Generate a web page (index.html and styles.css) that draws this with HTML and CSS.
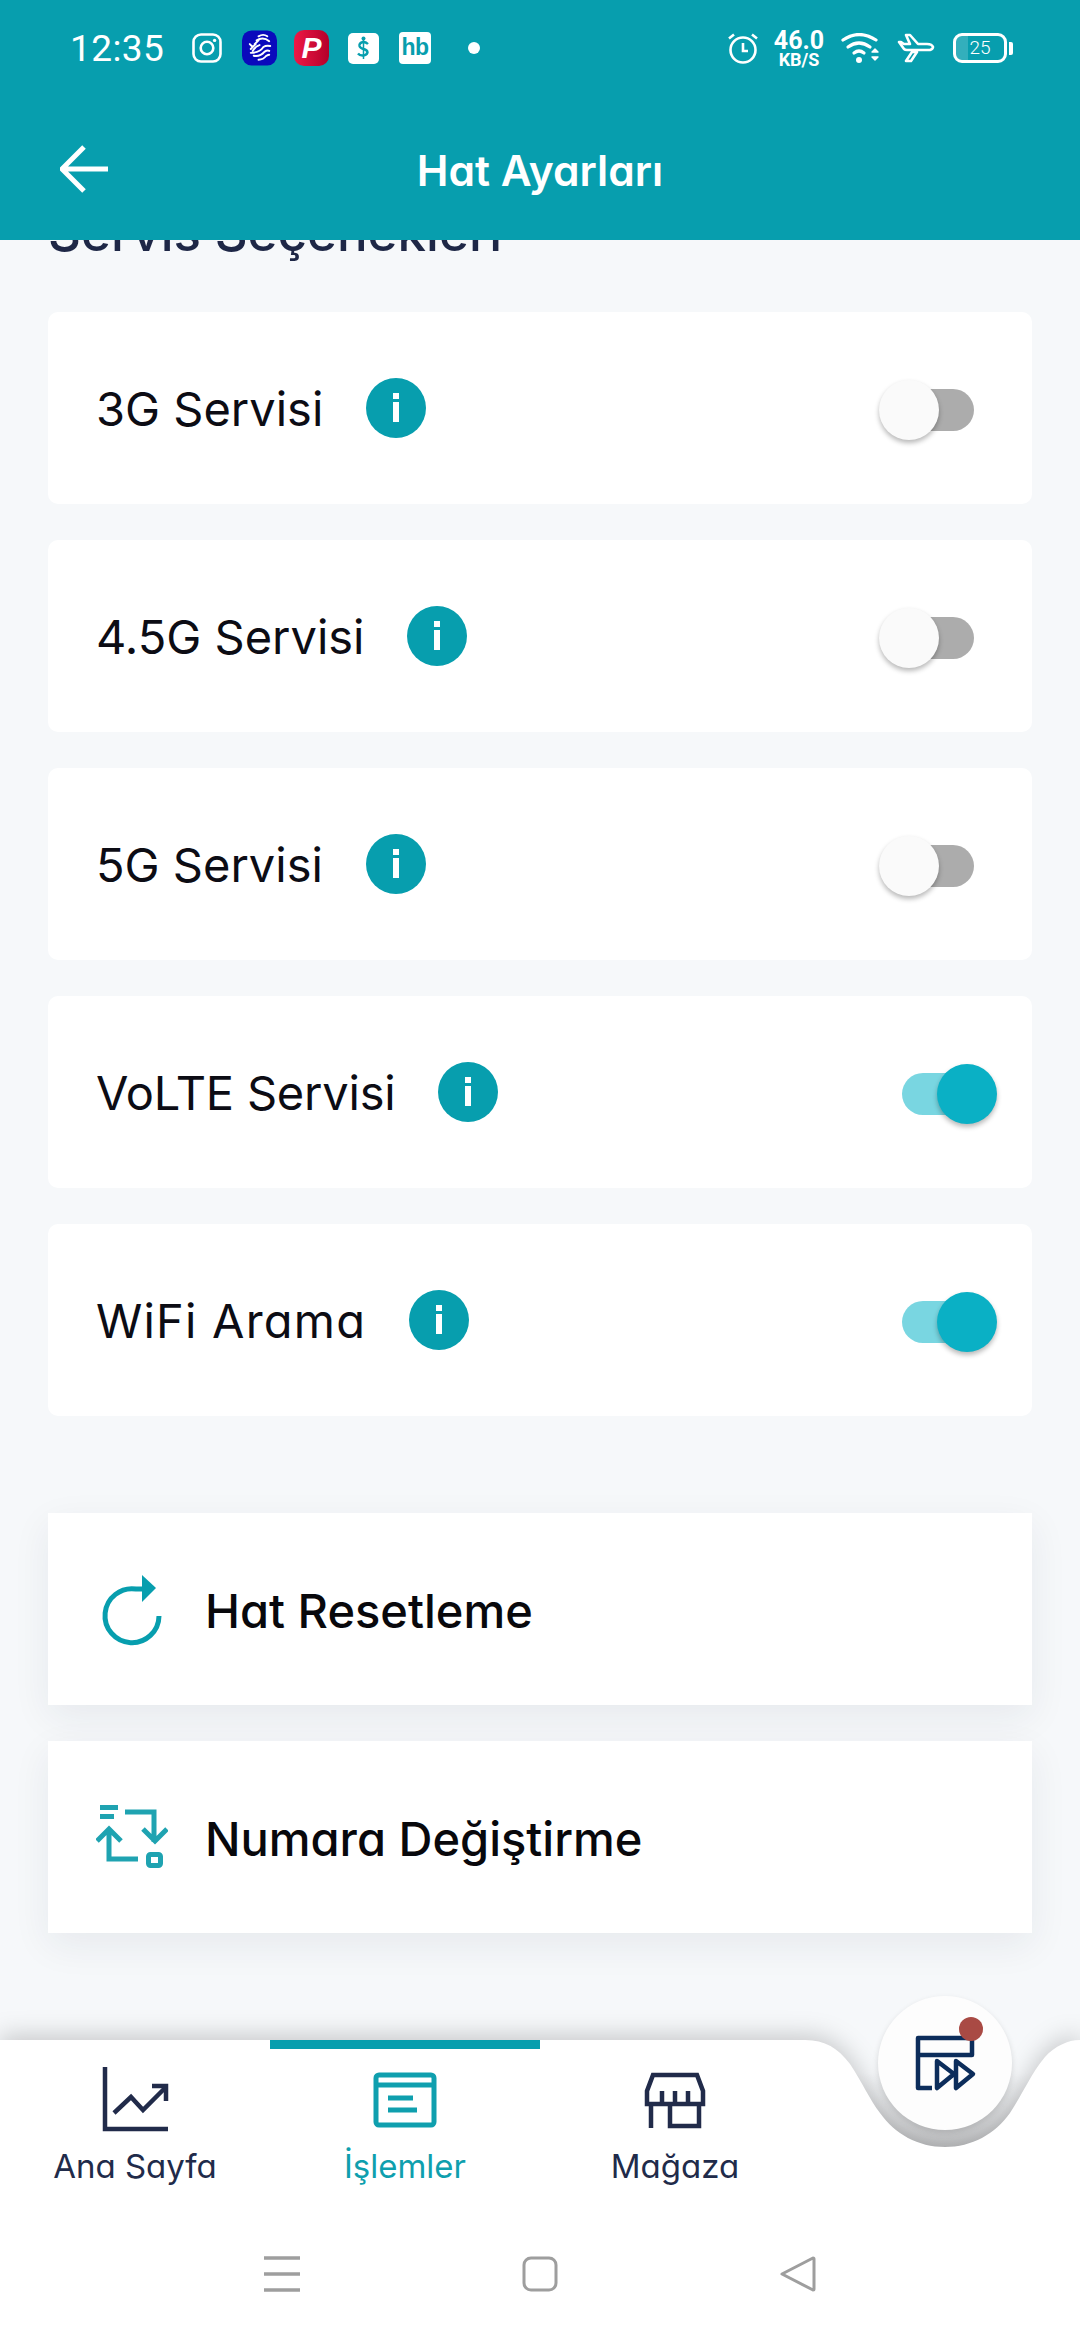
FILE: index.html
```html
<!DOCTYPE html>
<html lang="tr">
<head>
<meta charset="utf-8">
<title>Hat Ayarları</title>
<link rel="stylesheet" href="styles.css">
</head>
<body>
<div class="screen">
  <header class="header">
    <div class="status">
      <span class="clock">12:35</span>
      <div class="app-icons">
        <svg class="ic-insta" viewBox="0 0 30 30"><rect x="1.5" y="1.5" width="27" height="27" rx="7.5" fill="none" stroke="#fff" stroke-width="2.6"/><circle cx="15" cy="15" r="6.3" fill="none" stroke="#fff" stroke-width="2.6"/><circle cx="22.6" cy="7.4" r="1.7" fill="#fff"/></svg>
        <svg class="ic-tile" viewBox="0 0 36 36"><rect width="36" height="36" rx="10" fill="#0a0abc"/><g fill="none" stroke="#fff" stroke-width="2" stroke-linecap="round"><path d="M17 6q5-3 9 0"/><path d="M15 10q7-4 13 1"/><path d="M13 14l4-4M9 19l5-5M8 14l3 3"/><path d="M11 21q3-5 7-6"/><path d="M9 23q9 0 13-6q3-2 7-1"/><path d="M12 26q7 1 11-4q3-2 5-1"/><path d="M17 30q5 0 8-4q2-1 3-1"/></g></svg>
        <span class="tile-p">P</span>
        <svg class="ic-bank" viewBox="0 0 31 31"><rect width="31" height="31" rx="5" fill="#fff"/><circle cx="15.5" cy="5.5" r="2" fill="#079eae"/><path d="M20 11q-2-2-5-2q-4 1-3.500 4q.5 2 4 3q4 1 4 3.500q-1 3-5 3q-3 0-4.500-2" fill="none" stroke="#079eae" stroke-width="2.400"/><path d="M15.500 7v19" stroke="#079eae" stroke-width="1.500"/></svg>
        <span class="tile-hb">hb</span>
        <span class="notif-dot"></span>
      </div>
      <div class="sys-icons">
        <svg class="ic-alarm" viewBox="0 0 30 32"><g fill="none" stroke="#fff" stroke-width="2.600"><circle cx="15" cy="18" r="12.500"/><path d="M15 11v8h5M1 6.500l5-4M29 6.500l-5-4"/></g></svg>
        <div class="speed"><span class="speed-num">46.0</span><span class="speed-unit">KB/S</span></div>
        <svg class="ic-wifi" viewBox="0 0 40 31"><g fill="none" stroke="#fff" stroke-width="3.200" stroke-linecap="round"><path d="M2 7q16-11 33 0"/><path d="M7 14q11-8 22 0"/><path d="M13 20q5-4 10 0"/></g><circle cx="18" cy="27" r="3" fill="#fff"/><path d="M31 19l3-3 3 3zM31 24l3 3 3-3z" fill="#fff" stroke="#fff" stroke-width="1.400" stroke-linejoin="round"/></svg>
        <svg class="ic-plane" viewBox="0 0 38 30"><path d="M2 9l5 7q1 1 3 1h23q3-1 3-3q-1-3-6-3H21L13 2h-4l4 9H7L4 9zM15 19h5l-6 9h-5z" fill="none" stroke="#fff" stroke-width="2.600" stroke-linejoin="round"/></svg>
        <div class="battery"><span class="battery-fill"></span><span class="battery-num">25</span><span class="battery-nub"></span></div>
      </div>
    </div>
    <div class="toolbar">
      <svg class="back" viewBox="0 0 48 48"><path d="M24 2L2 24l22 22M2 24h46" fill="none" stroke="#fff" stroke-width="5"/></svg>
      <h1 class="title">Hat Ayarları</h1>
    </div>
  </header>

  <main class="content">
    <h2 class="section-title">Servis Seçenekleri</h2>
    <section class="cards">
      <div class="card"><span class="card-label">3G Servisi</span><span class="info"></span><span class="switch"><span class="knob"></span></span></div>
      <div class="card"><span class="card-label">4.5G Servisi</span><span class="info"></span><span class="switch"><span class="knob"></span></span></div>
      <div class="card"><span class="card-label">5G Servisi</span><span class="info"></span><span class="switch"><span class="knob"></span></span></div>
      <div class="card"><span class="card-label tight">VoLTE Servisi</span><span class="info"></span><span class="switch on"><span class="knob"></span></span></div>
      <div class="card"><span class="card-label wide">WiFi Arama</span><span class="info"></span><span class="switch on"><span class="knob"></span></span></div>
    </section>
    <section class="actions">
      <div class="action">
        <svg class="action-icon" viewBox="0 0 72 80"><path d="M46 20H40A27 27 0 1 0 63 47" fill="none" stroke="#079eae" stroke-width="5"/><path d="M46 6l14 13-14 14z" fill="#079eae"/></svg>
        <span class="action-label">Hat Resetleme</span>
      </div>
      <div class="action">
        <svg class="action-icon" viewBox="0 0 72 80"><g fill="none" stroke="#1fa3b1" stroke-width="5"><path d="M4 10.500h18M4 19.500h14M29 15h29v30M47 32l12 12 12-12M13 32v30h29M1 44l12-12 12 12"/><rect x="52.500" y="57.500" width="12" height="11" rx="2"/></g></svg>
        <span class="action-label">Numara Değiştirme</span>
      </div>
    </section>
  </main>

  <nav class="bottom">
    <svg class="bottom-bg" viewBox="0 0 1080 300">
      <defs><linearGradient id="notchShade" x1="0" y1="0" x2="0" y2="1"><stop offset="0.3" stop-color="#c6c7c9" stop-opacity="0"/><stop offset="1" stop-color="#c6c7c9"/></linearGradient></defs>
      <rect x="820" y="0" width="260" height="110" fill="url(#notchShade)"/>
      <path class="bottom-shape" d="M0 0H805C825 0 838 8 850 24C862 42 870 60 880 73C895 94 918 107 945 107C972 107 995 94 1010 73C1022 55 1032 32 1045 17C1055 6 1068 0 1080 0V300H0Z" fill="#fff"/>
    </svg>
    <div class="tabs">
      <div class="tab">
        <svg class="tab-icon" viewBox="0 0 68 68"><g fill="none" stroke="#212b4a" stroke-width="4.500"><path d="M4 2v62h63"/><path d="M13 48l17-16 12 13 23-23"/><path d="M51 21h14v15"/></g></svg>
        <span class="tab-label">Ana Sayfa</span>
      </div>
      <div class="tab active">
        <svg class="tab-icon" viewBox="0 0 68 68"><g fill="none" stroke="#0f9fae" stroke-width="5"><rect x="5" y="10" width="58" height="50" rx="3"/><path d="M5 20h58M17 33h25M17 45h29"/></g></svg>
        <span class="tab-label">İşlemler</span>
      </div>
      <div class="tab">
        <svg class="tab-icon" viewBox="0 0 68 68"><g fill="none" stroke="#212b4a" stroke-width="4.500"><path d="M12 10h44l6 16v13H6V26z"/><path d="M21 26v13M34 26v13M47 26v13"/><path d="M10 39v24M29 39v22h29V39"/></g></svg>
        <span class="tab-label">Mağaza</span>
      </div>
    </div>
    <button class="fab">
      <svg class="fab-icon" viewBox="0 0 70 64"><g fill="none" stroke="#0c2d5b" stroke-width="4.500" stroke-linejoin="round"><path d="M18 54H4V4h54v17H4"/><path d="M23 27l17 13-17 14zM42 27l17 13-17 14z"/></g></svg>
      <span class="fab-dot"></span>
    </button>
    <div class="sysnav">
      <svg class="sys-btn" viewBox="0 0 36 36"><path d="M0 2h36M0 18h36M0 34h36" stroke="#9e9e9e" stroke-width="3.500"/></svg>
      <svg class="sys-btn" viewBox="0 0 36 36"><rect x="2" y="2" width="32" height="32" rx="7" fill="none" stroke="#9e9e9e" stroke-width="3"/></svg>
      <svg class="sys-btn" viewBox="0 0 36 36"><path d="M2 18L33 2q1 0 1 1v30q0 1-1 1z" fill="none" stroke="#9e9e9e" stroke-width="3" stroke-linejoin="round"/></svg>
    </div>
  </nav>
</div>
</body>
</html>
```
FILE: styles.css
```css
* { box-sizing: border-box; }

html, body { margin: 0; padding: 0; }

body {
  font-family: Inter, "Noto Sans", sans-serif;
  font-feature-settings: "cv11" 1;
  background: #f6f8fa;
}

.screen {
  width: 1080px;
  height: 2340px;
  display: flex;
  flex-direction: column;
  overflow: hidden;
  background: #f6f8fa;
}

/* Header */
.header {
  flex: 0 0 240px;
  background: #079eae;
  position: relative;
  z-index: 2;
  color: #fff;
}

.status {
  height: 96px;
  display: flex;
  align-items: center;
  padding: 0 73px 0 70px;
}

.clock {
  width: 122px;
  font-family: Roboto, sans-serif;
  font-weight: 400;
  font-size: 37px;
  letter-spacing: 0.4px;
}

.app-icons {
  display: flex;
  align-items: center;
}

.ic-insta { width: 30px; height: 30px; margin-right: 20px; }
.ic-tile { width: 35px; height: 36px; margin-right: 17px; }

.tile-p {
  width: 35px;
  height: 36px;
  margin-right: 19px;
  border-radius: 10px;
  background: linear-gradient(90deg, #ee1846, #b4002a);
  font-family: "Liberation Sans", sans-serif;
  font-style: italic;
  font-weight: 700;
  font-size: 30px;
  line-height: 36px;
  text-align: center;
}

.ic-bank { width: 31px; height: 31px; margin-right: 20px; }

.tile-hb {
  width: 32px;
  height: 32px;
  margin-right: 37px;
  border-radius: 4px;
  background: #fff;
  color: #079eae;
  font-family: "Liberation Sans", sans-serif;
  font-weight: 700;
  font-size: 23px;
  line-height: 31px;
  text-align: center;
  letter-spacing: -0.5px;
}

.notif-dot {
  width: 12px;
  height: 12px;
  border-radius: 50%;
  background: #fff;
}

.sys-icons {
  margin-left: auto;
  display: flex;
  align-items: center;
}

.ic-alarm { width: 30px; height: 32px; margin-right: 16px; }

.speed {
  width: 50px;
  margin-right: 17px;
  display: flex;
  flex-direction: column;
  align-items: center;
  font-family: Roboto, sans-serif;
  font-weight: 700;
}

.speed-num { font-size: 25px; line-height: 22px; }
.speed-unit { font-size: 18px; line-height: 15px; }

.ic-wifi { width: 40px; height: 31px; margin-right: 16px; }
.ic-plane { width: 38px; height: 30px; margin-right: 18px; }

.battery {
  position: relative;
  width: 54px;
  height: 30px;
  border: 3px solid #fff;
  border-radius: 9px;
  font-family: Roboto, sans-serif;
  font-weight: 300;
  font-size: 19px;
  line-height: 24px;
  text-align: center;
}

.battery-fill {
  position: absolute;
  left: 0;
  top: 0;
  bottom: 0;
  width: 12px;
  background: rgba(255, 255, 255, 0.18);
}

.battery-num { position: relative; }

.battery-nub {
  position: absolute;
  right: -9px;
  top: 6px;
  width: 4px;
  height: 13px;
  border-radius: 0 2px 2px 0;
  background: #fff;
}

.toolbar {
  height: 144px;
  position: relative;
  display: flex;
  align-items: center;
  justify-content: center;
  padding-top: 4px;
}

.back {
  position: absolute;
  left: 60px;
  top: 49px;
  width: 48px;
  height: 48px;
}

.title {
  margin: 0;
  font-size: 42.5px;
  font-weight: 600;
}

/* Scrolled content */
.content {
  flex: 1;
  min-height: 0;
  padding: 0 48px;
}

.section-title {
  margin: -37px 0 49px;
  height: 60px;
  line-height: 60px;
  font-size: 51px;
  font-weight: 500;
  color: #1e2746;
}

.cards,
.actions {
  display: flex;
  flex-direction: column;
  gap: 36px;
}

.actions { margin-top: 97px; }

.card {
  height: 192px;
  padding: 0 58px 0 48px;
  display: flex;
  align-items: center;
  gap: 43px;
  background: #fff;
  border-radius: 10px;
}

.card-label {
  font-size: 47px;
  font-weight: 400;
  color: #0c0c14;
}

.card-label.tight { letter-spacing: -0.2px; }
.card-label.wide { letter-spacing: 1.2px; }

.info {
  position: relative;
  width: 60px;
  height: 60px;
  border-radius: 50%;
  background: #079eae;
}

.info::before,
.info::after {
  content: "";
  position: absolute;
  left: 27px;
  width: 6px;
  background: #fff;
}

.info::before { top: 15px; height: 6px; }
.info::after { top: 24px; height: 20px; }

.switch {
  position: relative;
  margin-left: auto;
  top: 2px;
  width: 72px;
  height: 42px;
  border-radius: 21px;
  background: #acacac;
}

.knob {
  position: absolute;
  left: -23px;
  top: -9px;
  width: 60px;
  height: 60px;
  border-radius: 50%;
  background: #fafafa;
  box-shadow: 0 3px 5px rgba(0, 0, 0, 0.28);
}

.switch.on { background: #79d6e1; }
.switch.on .knob { left: 35px; background: #0ab0c5; }

.action {
  height: 192px;
  padding-left: 48px;
  display: flex;
  align-items: center;
  gap: 37px;
  background: #fff;
  box-shadow: 0 12px 36px rgba(30, 40, 70, 0.07);
}

.action-icon {
  width: 72px;
  height: 80px;
  flex: none;
}

.action-label {
  padding-top: 3px;
  font-size: 47px;
  font-weight: 450;
  color: #08080c;
}

/* Bottom navigation */
.bottom {
  flex: 0 0 300px;
  position: relative;
  z-index: 1;
}

.bottom-bg {
  position: absolute;
  left: 0;
  top: 0;
  width: 1080px;
  height: 300px;
  overflow: visible;
}

.bottom-shape { filter: drop-shadow(0 -4px 12px rgba(0, 0, 0, 0.2)); }

.tabs {
  position: relative;
  display: flex;
  width: 810px;
}

.tab {
  flex: 1;
  height: 160px;
  padding-top: 25px;
  display: flex;
  flex-direction: column;
  align-items: center;
  gap: 10px;
  color: #212b4a;
}

.tab-icon { width: 68px; height: 68px; }

.tab-label { font-size: 33px; line-height: 46px; }

.tab.active {
  color: #0f9fae;
  border-top: 9px solid #079eae;
  padding-top: 16px;
}

.fab {
  position: absolute;
  left: 878px;
  top: -44px;
  width: 134px;
  height: 134px;
  padding: 0;
  border: 0;
  border-radius: 50%;
  background: #fdfdfd;
  box-shadow: 0 3px 6px rgba(0, 0, 0, 0.14);
}

.fab-icon {
  position: absolute;
  left: 36px;
  top: 38px;
  width: 70px;
  height: 64px;
}

.fab-dot {
  position: absolute;
  left: 81px;
  top: 21px;
  width: 24px;
  height: 24px;
  border-radius: 50%;
  background: #a94a44;
}

.sysnav {
  position: relative;
  height: 140px;
  padding: 56px 0 0 264px;
  display: flex;
  gap: 222px;
}

.sys-btn { width: 36px; height: 36px; }
```
